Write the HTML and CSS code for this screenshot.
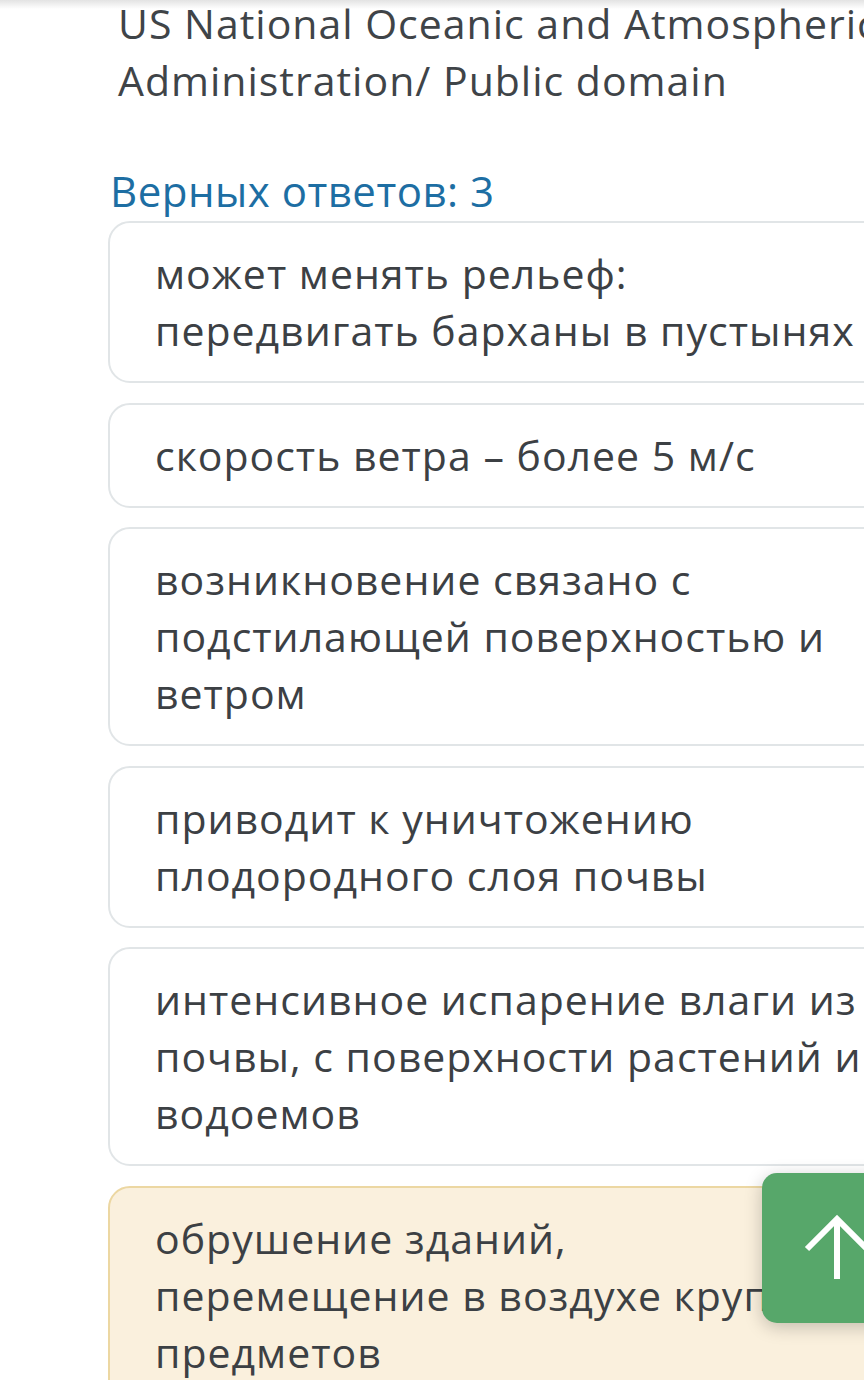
FILE: index.html
```html
<!DOCTYPE html>
<html lang="ru">
<head>
    <meta charset="UTF-8">
    <meta name="viewport" content="width=device-width, initial-scale=1.0">
    <title>Верных ответов</title>
    <link rel="stylesheet" href="styles.css">
</head>
<body>
    <div class="top-shade"></div>

    <div class="page">
        <p class="caption">US National Oceanic and Atmospheric Administration/ Public domain</p>

        <h2 class="answers-title">Верных ответов: 3</h2>

        <div class="answers">
            <div class="answer">может менять рельеф: передвигать барханы в пустынях</div>
            <div class="answer">скорость ветра – более 5 м/с</div>
            <div class="answer">возникновение связано с подстилающей поверхностью и ветром</div>
            <div class="answer">приводит к уничтожению плодородного слоя почвы</div>
            <div class="answer">интенсивное испарение влаги из почвы, с поверхности растений и водоемов</div>
            <div class="answer answer-selected">обрушение зданий, перемещение в воздухе крупных предметов</div>
        </div>
    </div>

    <!-- кнопка наверх -->
    <a href="#" class="to-top" aria-label="Наверх">
        <svg width="150" height="150" viewBox="0 0 150 150">
            <path d="M75 106 V46 M45 76 L75 46 L105 76" fill="none" stroke="#fff" stroke-width="6"/>
        </svg>
    </a>
</body>
</html>
```

FILE: styles.css
```css
html,
body {
    overflow: hidden;
}
body {
    margin: 0;
    background-color: #fff;
    font-family: "Open Sans", "Noto Sans", Arial, sans-serif;
    color: #3c4044;
    height: 1380px;
    position: relative;
}
.top-shade {
    position: absolute;
    top: 0;
    left: 0;
    right: 0;
    height: 9px;
    background: linear-gradient(to bottom, #e3e3e3, rgba(255,255,255,0));
}
.page {
    width: 860px;
    margin-left: 108px;
}
.caption {
    margin: -5px 0 0 10px;
    font-size: 41px;
    letter-spacing: 1px;
    line-height: 57px;
    color: #3f4448;
    width: 800px;
}
.answers-title {
    margin: 53px 0 0 2px;
    font-size: 42px;
    letter-spacing: 0.5px;
    line-height: 57px;
    font-weight: normal;
    color: #1d6ea3;
}
.answers {
    display: flex;
    flex-direction: column;
    gap: 19.6px;
    margin-top: 2px;
}
.answer {
    border: 2px solid #e1e5e7;
    border-radius: 22px;
    padding: 22px 40px 22px 45px;
    font-size: 41px;
    letter-spacing: 1px;
    line-height: 57px;
    background: #fff;
    width: 716px;
}
.answer-selected {
    background-color: #faf0dd;
    border-color: #ecd7a2;
}
.to-top {
    position: absolute;
    left: 762px;
    top: 1173px;
    width: 150px;
    height: 150px;
    border-radius: 15px;
    background-color: #57a76a;
    box-shadow: 0 4px 18px rgba(0,0,0,0.22);
    display: block;
}
.to-top svg {
    display: block;
}
```
